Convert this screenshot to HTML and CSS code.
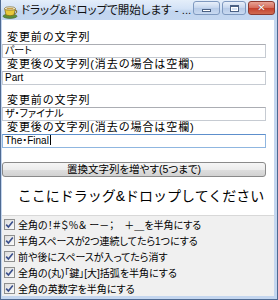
FILE: index.html
```html
<!DOCTYPE html>
<html lang="ja">
<head>
<meta charset="utf-8">
<link rel="stylesheet" href="styles.css">
</head>
<body>
<div class="window">
  <div class="titlebar">
    <svg class="app-icon" width="16" height="16" viewBox="0 0 16 16">
      <ellipse cx="8" cy="13.2" rx="7" ry="2.2" fill="#5f8f3a" stroke="#3d5e22" stroke-width="0.6"/>
      <path d="M2.6 5.5 L13.4 5.5 L12 12 Q8 13.6 4 12 Z" fill="#e8c83a" stroke="#7a6418" stroke-width="0.7"/>
      <path d="M13 7 Q15.6 7.2 14.6 9.6 Q13.8 10.6 12.3 10.4" fill="none" stroke="#7a6418" stroke-width="1"/>
      <ellipse cx="8" cy="5.5" rx="5.4" ry="1.7" fill="#ffffff" stroke="#7a6418" stroke-width="0.7"/>
      <ellipse cx="8" cy="5.7" rx="3.6" ry="0.9" fill="#c8a24a"/>
    </svg>
    <span class="title">ドラッグ&amp;ドロップで開始します - ...</span>
    <div class="controls">
      <div class="ctl ctl-min"><span class="min-glyph"></span></div>
      <div class="ctl ctl-max"><span class="max-glyph"></span></div>
      <div class="ctl ctl-close"><span class="close-glyph">✕</span></div>
    </div>
  </div>
  <div class="client">
    <div class="fields">
      <div class="group">
        <div class="label">変更前の文字列</div>
        <div class="input">パート</div>
        <div class="label">変更後の文字列(消去の場合は空欄)</div>
        <div class="input">Part</div>
      </div>
      <div class="group">
        <div class="label">変更前の文字列</div>
        <div class="input">ザ・ファイナル</div>
        <div class="label">変更後の文字列(消去の場合は空欄)</div>
        <div class="input input-focus">The・Final<span class="caret"></span></div>
      </div>
    </div>
    <div class="button">置換文字列を増やす(5つまで)</div>
    <div class="drop">ここにドラッグ&amp;ドロップしてください</div>
    <div class="options">
      <div class="opt"><span class="box"><svg width="9" height="9" viewBox="0 0 9 9"><path d="M1.2 4.6 L3.4 7 L7.8 1.4" fill="none" stroke="#3a4f8c" stroke-width="1.6"/></svg></span><span>全角の！＃＄％＆ ー－；　＋＿を半角にする</span></div>
      <div class="opt"><span class="box"><svg width="9" height="9" viewBox="0 0 9 9"><path d="M1.2 4.6 L3.4 7 L7.8 1.4" fill="none" stroke="#3a4f8c" stroke-width="1.6"/></svg></span><span>半角スペースが2つ連続してたら1つにする</span></div>
      <div class="opt"><span class="box"><svg width="9" height="9" viewBox="0 0 9 9"><path d="M1.2 4.6 L3.4 7 L7.8 1.4" fill="none" stroke="#3a4f8c" stroke-width="1.6"/></svg></span><span>前や後にスペースが入ってたら消す</span></div>
      <div class="opt"><span class="box"><svg width="9" height="9" viewBox="0 0 9 9"><path d="M1.2 4.6 L3.4 7 L7.8 1.4" fill="none" stroke="#3a4f8c" stroke-width="1.6"/></svg></span><span>全角の(丸)「鍵」[大]括弧を半角にする</span></div>
      <div class="opt"><span class="box"><svg width="9" height="9" viewBox="0 0 9 9"><path d="M1.2 4.6 L3.4 7 L7.8 1.4" fill="none" stroke="#3a4f8c" stroke-width="1.6"/></svg></span><span>全角の英数字を半角にする</span></div>
    </div>
  </div>
</div>
</body>
</html>
```

FILE: styles.css
```css
* { box-sizing: border-box; }
html, body { margin: 0; padding: 0; }
body {
  width: 278px;
  height: 300px;
  overflow: hidden;
  font-family: "Liberation Sans", "Noto Sans CJK JP", sans-serif;
  color: #000;
}
.window {
  width: 278px;
  height: 300px;
  display: flex;
  flex-direction: column;
  background: #c4d6ef;
  border: 1px solid #4f6a92;
  border-top: none;
}
.titlebar {
  height: 20px;
  flex: none;
  display: flex;
  align-items: center;
  background: linear-gradient(#e4eefa 0%, #d3e2f6 45%, #c1d5ef 55%, #c4d7f0 100%);
  position: relative;
  padding-left: 1px;
}
.app-icon { flex: none; margin-right: 3px; margin-top: 1px; }
.title {
  font-size: 11.5px;
  line-height: 14px;
  white-space: nowrap;
  font-feature-settings: "palt";
  color: #111;
}
.controls {
  position: absolute;
  top: 1px;
  right: 2px;
  display: flex;
  gap: 2px;
}
.ctl {
  height: 14px;
  border-radius: 3px;
  border: 1px solid #7f99bf;
  display: flex;
  align-items: center;
  justify-content: center;
  background: linear-gradient(#e9f0fa, #c5d6ee 50%, #b6cae7 51%, #c9daf1);
}
.ctl-min { width: 27px; }
.ctl-max { width: 24px; }
.ctl-close {
  width: 27px;
  border-color: #8c3a30;
  background: linear-gradient(#e9a395, #d56b5a 50%, #c4402c 51%, #d06a50);
}
.min-glyph {
  width: 9px; height: 3px;
  margin-top: 5px;
  background: #fff;
  border: 1px solid #4b6184;
}
.max-glyph {
  width: 9px; height: 7px;
  border: 1px solid #4b6184;
  box-shadow: inset 0 0 0 1px #fff;
  background: #d6e3f4;
  border-top-width: 2px;
}
.close-glyph {
  color: #fff;
  font-family: "DejaVu Sans", sans-serif;
  font-size: 10px;
  font-weight: bold;
  line-height: 10px;
  text-shadow: 0 0 1px #6a1a10;
}
.client {
  flex: 1;
  margin: 0 3px 3px 1px;
  background: #fff;
  display: flex;
  flex-direction: column;
}
.fields {
  padding-top: 11px;
  display: flex;
  flex-direction: column;
  gap: 9px;
}
.group { display: flex; flex-direction: column; }
.label {
  height: 13px;
  line-height: 13px;
  font-size: 11px;
  letter-spacing: 0.9px;
  padding-left: 5px;
  white-space: nowrap;
}
.input {
  height: 14px;
  width: 264px;
  border: 1px solid #c6cbd2;
  border-top-color: #abadb3;
  font-size: 10px;
  line-height: 12px;
  padding-left: 2px;
  font-feature-settings: "palt";
  white-space: nowrap;
}
.input-focus {
  border-color: #8fb6e0;
  border-top-color: #5d8fcc;
}
.caret {
  display: inline-block;
  width: 1px;
  height: 10px;
  background: #000;
  vertical-align: -1px;
  margin-left: 1px;
}
.button {
  margin-top: 14px;
  height: 15px;
  width: 264px;
  border: 1px solid #8a8a8a;
  border-radius: 3px;
  background: linear-gradient(#f6f6f6, #ececec 50%, #dedede 51%, #d2d2d2);
  font-size: 10.5px;
  line-height: 13px;
  text-align: center;
  font-feature-settings: "palt";
  white-space: nowrap;
}
.drop {
  flex: 1;
  display: flex;
  align-items: center;
  justify-content: center;
  font-size: 14px;
  padding-bottom: 3px;
  padding-left: 6px;
  white-space: nowrap;
}
.options {
  flex: none;
  background: #f0f0f0;
  border-top: 1px solid #d8d8d8;
  padding-top: 0;
  display: flex;
  flex-direction: column;
}
.opt {
  height: 16px;
  display: flex;
  align-items: center;
  font-size: 10px;
  font-feature-settings: "palt";
  white-space: nowrap;
  padding-left: 2px;
}
.box {
  width: 11px;
  height: 11px;
  border: 1px solid #8e8f8f;
  background: linear-gradient(135deg, #dcdcdc, #fbfbfb);
  display: flex;
  align-items: center;
  justify-content: center;
  margin-right: 3px;
  flex: none;
}
```
